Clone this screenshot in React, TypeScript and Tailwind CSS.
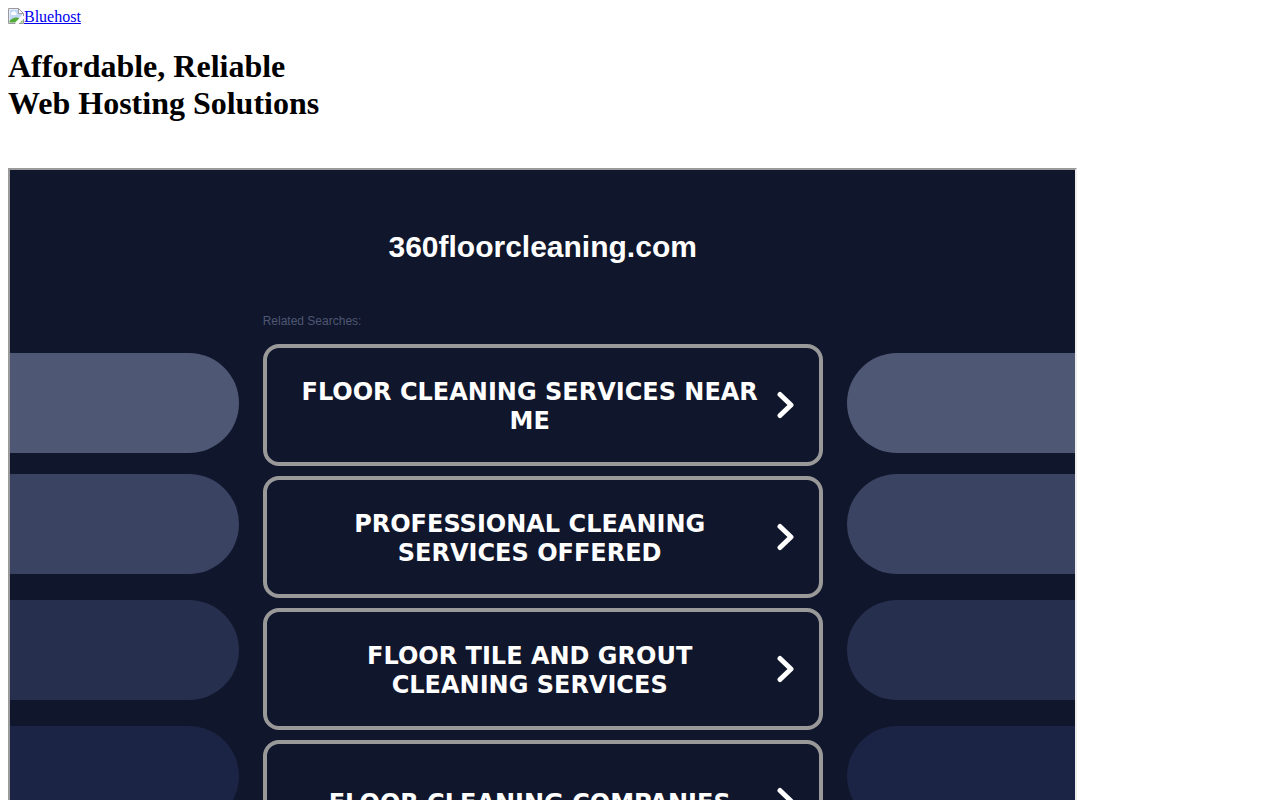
const searches = [
  'Floor Cleaning Services Near Me',
  'Professional Cleaning Services Offered',
  'Floor Tile And Grout Cleaning Services',
  'Floor Cleaning Companies',
];

function BrokenImageIcon() {
  return (
    <svg className="size-4 shrink-0" viewBox="0 0 16 16" aria-hidden="true">
      <path d="M1 1h9.5L15 5.5V15H1z" fill="#fff" />
      <path d="M1.500 1.500h9v4.500H14v1L7 14.500H1.500z" fill="#c3d8f6" />
      <path d="M3 6.200a1.400 1.400 0 0 1 1.400-2 1.800 1.800 0 0 1 3.300.6 1.200 1.200 0 0 1 .3 2.200H3.600z" fill="#fff" />
      <path d="M1.500 14.500V13C3.500 10.800 5.500 9.500 8 9.500c1.300 0 2.500.3 3.300 1L7 14.500z" fill="#56ab39" />
      <path d="M11.800 14.500 14.500 12v2.500z" fill="#56ab39" />
      <path d="M7.500 16 16 8v2.500L10.500 16z" fill="#fff" />
      <path
        d="M7.500 15.500H.5V.5h10l5 5V8M10.500.5v5h5M15.500 11v4.500H11"
        fill="none"
        stroke="#9a9a9a"
      />
    </svg>
  );
}

function Chevron() {
  return (
    <svg className="h-7 w-[18px] shrink-0" viewBox="0 0 18 28" fill="none" aria-hidden="true">
      <path
        d="M3 3.500 14 14 3 24.500"
        stroke="#fff"
        strokeWidth="5"
        strokeLinecap="round"
        strokeLinejoin="round"
      />
    </svg>
  );
}

function SideBars({ side }: { side: 'left' | 'right' }) {
  const shape = side === 'left' ? 'rounded-r-full' : 'rounded-l-full';

  return (
    <div className="flex flex-1 flex-col pt-10" aria-hidden="true">
      <div className={`h-[100px] bg-[#4e5773] ${shape}`} />
      <div className={`mt-[21px] h-[100px] bg-[#3b4363] ${shape}`} />
      <div className={`mt-[26px] h-[100px] bg-[#262f4e] ${shape}`} />
      <div className={`mt-[26px] h-[100px] bg-[#1b2444] ${shape}`} />
    </div>
  );
}

function SearchCard({ label }: { label: string }) {
  return (
    <a
      href="#"
      className="flex min-h-[122px] items-center gap-2 rounded-2xl border-4 border-[#999] px-6 font-[Verdana,'DejaVu_Sans',sans-serif] text-2xl/[29px] font-bold text-white"
    >
      <span className="flex-1 px-[6px] pt-1 text-center uppercase">{label}</span>
      <Chevron />
    </a>
  );
}

export default function App() {
  return (
    <div className="flex h-screen flex-col items-start overflow-hidden bg-white px-2 pt-2 font-['Liberation_Serif',serif] text-black">
      <a href="#" className="flex h-[18px] items-start text-base/[18px] text-[#0000ee] underline">
        <BrokenImageIcon />
        Bluehost
      </a>

      <h1 className="mt-[22px] text-[32px]/[37px] font-bold">
        Affordable, Reliable
        <br />
        Web Hosting Solutions
      </h1>

      <main className="mt-[46px] w-[84.6%] shrink-0 border-2 border-t-[#9a9a9a] border-r-[#ededed] border-b-[#ededed] border-l-[#9a9a9a] bg-[#10162b] pt-[59px] pb-10 font-['Liberation_Sans',Arial,sans-serif]">
        <h2 className="text-center text-3xl/9 font-bold text-white">360floorcleaning.com</h2>

        <div className="mt-12 flex gap-6">
          <SideBars side="left" />
          <section className="flex w-[560px] flex-col gap-[10px]">
            <p className="mb-[5px] text-xs text-[#4e5773]">Related Searches:</p>
            {searches.map((label) => (
              <SearchCard key={label} label={label} />
            ))}
          </section>
          <SideBars side="right" />
        </div>
      </main>
    </div>
  );
}
